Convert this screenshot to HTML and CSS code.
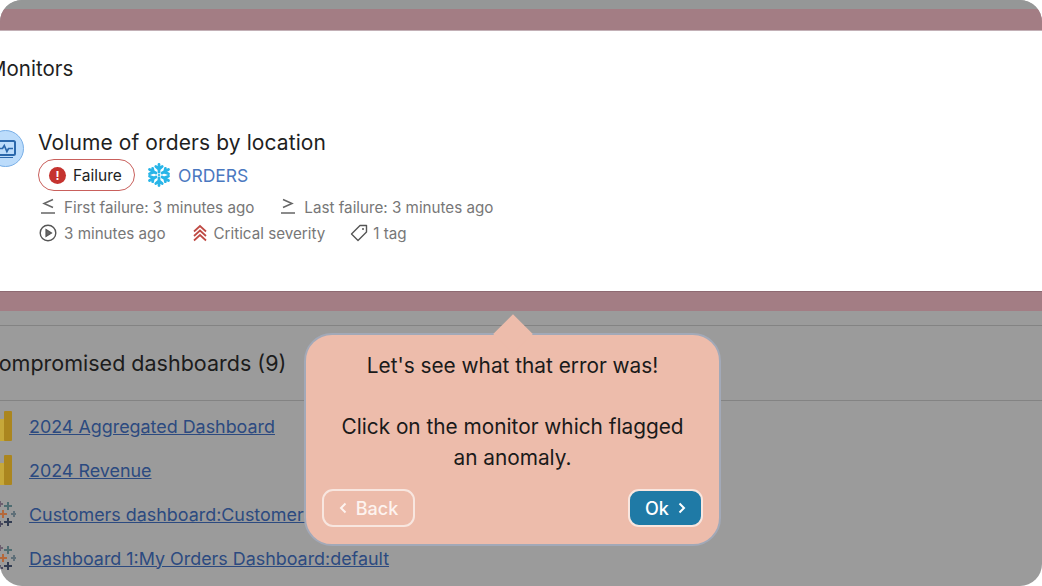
FILE: index.html
```
<!DOCTYPE html>
<html lang="en">
<head>
<meta charset="utf-8">
<title>Monitors</title>
<link rel="stylesheet" href="styles.css">
</head>
<body>
<div class="screen">
  <div class="dim-top"></div>
  <div class="band band-top"></div>
  <section class="card">
    <h2 class="card-title">Monitors</h2>
    <div class="monitor">
      <div class="monitor-icon">
        <svg viewBox="0 0 20 18" width="20" height="18"><rect x="1" y="1" width="18" height="14" rx="1.500" fill="none" stroke="#2a67ab" stroke-width="2"/><path d="M3 8.500h3.500l1.800-3 2.600 6 1.600-3H17" fill="none" stroke="#2a67ab" stroke-width="1.700"/><path d="M3 17.500h14" stroke="#2a67ab" stroke-width="1"/></svg>
      </div>
      <div class="monitor-body">
        <div class="monitor-name">Volume of orders by location</div>
        <div class="tags">
          <span class="badge"><span class="badge-dot">!</span>Failure</span>
          <svg class="snow" viewBox="0 0 24 24" width="24" height="24"><g stroke="#29b5e8" stroke-width="2.800" stroke-linecap="round" fill="none"><path d="M12 1.500v7.500M12 15v7.500M8.800 3.500 12 6.300l3.200-2.800M8.800 20.500 12 17.700l3.200 2.800"/><path d="M2.500 6.500 9 10M15 14l6.500 3.500M2.500 17.500 9 14M15 10l6.500-3.500"/><path d="M2.500 10.800 6.300 9.300 5.600 5.300M21.500 10.800 17.700 9.300l.7-4M2.500 13.200 6.300 14.700l-.7 4M21.500 13.200 17.700 14.700l.7 4"/></g><path d="M12 10.500 13.500 12 12 13.500 10.500 12z" fill="#29b5e8"/></svg>
          <span class="table-name">ORDERS</span>
        </div>
        <div class="meta meta-first">
          <span class="meta-item"><svg class="ic" viewBox="0 0 18 18" width="18" height="18"><path d="M14 1.500 5 5.500l9 4M2 15h14" fill="none" stroke="#666" stroke-width="1.500"/></svg>First failure: 3 minutes ago</span>
          <span class="meta-item"><svg class="ic" viewBox="0 0 18 18" width="18" height="18"><path d="M4 1.500l9 4-9 4M2 15h14" fill="none" stroke="#666" stroke-width="1.500"/></svg>Last failure: 3 minutes ago</span>
        </div>
        <div class="meta">
          <span class="meta-item"><svg class="ic" viewBox="0 0 18 18" width="18" height="18"><circle cx="9" cy="9" r="7.800" fill="none" stroke="#555" stroke-width="1.400"/><path d="M7 5.500 12.500 9 7 12.500z" fill="#666" stroke="#555" stroke-width="1.200"/></svg>3 minutes ago</span>
          <span class="meta-item tight"><svg class="ic" viewBox="0 0 18 18" width="18" height="18"><path d="M3 7.500 9 2l6 5.500M3 12 9 6.500l6 5.500M3 16.500 9 11l6 5.500" fill="none" stroke="#bf4a44" stroke-width="1.700"/></svg>Critical severity</span>
          <span class="meta-item tight"><svg class="ic" viewBox="0 0 18 18" width="18" height="18"><path d="M10 1.500h6.500V8L8 16.500 1.500 10z" fill="none" stroke="#555" stroke-width="1.400" stroke-linejoin="round"/><circle cx="13" cy="5" r="1" fill="#555"/></svg>1 tag</span>
        </div>
      </div>
    </div>
  </section>
  <div class="band band-bottom"></div>
  <section class="lower">
    <h2 class="lower-title">Compromised dashboards (9)</h2>
    <ul class="links">
      <li class="link-row"><svg class="bi" viewBox="0 0 12 30" width="12" height="30"><rect x="-3" y="8" width="8" height="22" fill="#c6a83a"/><rect x="4" y="0" width="8" height="30" rx="1" fill="#ab861f"/></svg><a href="#">2024 Aggregated Dashboard</a></li>
      <li class="link-row"><svg class="bi" viewBox="0 0 12 30" width="12" height="30"><rect x="-3" y="8" width="8" height="22" fill="#c6a83a"/><rect x="4" y="0" width="8" height="30" rx="1" fill="#ab861f"/></svg><a href="#">2024 Revenue</a></li>
      <li class="link-row"><svg class="tb" viewBox="0 0 16 26" width="16" height="26"><g fill="none" stroke-width="2"><path d="M8 1v8M4 5h8" stroke="#4f6d72"/><path d="M3 9v8M-1 13h8" stroke="#b5683a"/><path d="M8 17v8M4 21h8" stroke="#333d52"/><path d="M14 10v6M11 13h5" stroke="#5f6f78"/><path d="M0 0v6M-3 3h6" stroke="#6d6070"/><path d="M0 20v6M-3 23h6" stroke="#4a4a5e"/></g></svg><a href="#">Customers dashboard:Customers</a></li>
      <li class="link-row"><svg class="tb" viewBox="0 0 16 26" width="16" height="26"><g fill="none" stroke-width="2"><path d="M8 1v8M4 5h8" stroke="#4f6d72"/><path d="M3 9v8M-1 13h8" stroke="#b5683a"/><path d="M8 17v8M4 21h8" stroke="#333d52"/><path d="M14 10v6M11 13h5" stroke="#5f6f78"/><path d="M0 0v6M-3 3h6" stroke="#6d6070"/><path d="M0 20v6M-3 23h6" stroke="#4a4a5e"/></g></svg><a href="#">Dashboard 1:My Orders Dashboard:default</a></li>
    </ul>
  </section>
  <aside class="tip">
    <p class="tip-text">Let's see what that error was!<br><br>Click on the monitor which flagged an anomaly.</p>
    <div class="tip-actions">
      <button class="btn btn-back" type="button"><svg viewBox="0 0 8 12" width="8" height="12"><path d="M6.500 1.500 2 6l4.500 4.500" fill="none" stroke="currentColor" stroke-width="2"/></svg>Back</button>
      <button class="btn btn-ok" type="button">Ok<svg viewBox="0 0 8 12" width="8" height="12"><path d="M1.500 1.500 6 6l-4.500 4.500" fill="none" stroke="currentColor" stroke-width="2"/></svg></button>
    </div>
  </aside>
</div>
</body>
</html>
```
FILE: styles.css
```
* { box-sizing: border-box; }
html, body { margin: 0; height: 100%; background: #fff; overflow: hidden; }
body { font-family: Inter, "Liberation Sans", sans-serif; }
.screen {
  position: relative;
  width: 1042px;
  height: 586px;
  border-radius: 22px;
  overflow: hidden;
  background: #9b9b9b;
}
.dim-top { height: 9px; background: #959797; }
.band { height: 21px; background: #a37d84; }
.band-top { border-bottom: 1px solid #c3b0b6; height: 22px; }
.band-bottom { height: 20px; border-top: 1px solid #8e6a72; }
.card { height: 260px; background: #fff; padding: 25px 0 0; }
.card-title {
  margin: 0 0 0 -12px;
  font-size: 20.500px;
  line-height: 26px;
  font-weight: 400;
  color: #1f1f1f;
  white-space: nowrap;
}
.monitor { display: flex; margin: 48px 0 0 -13px; gap: 14px; }
.monitor-icon {
  width: 37px;
  height: 37px;
  border-radius: 50%;
  background: #bcdcfb;
  border: 1px solid #78aee6;
  display: flex;
  align-items: center;
  justify-content: center;
  padding-left: 1px;
  flex: none;
}
.monitor-body { display: flex; flex-direction: column; }
.monitor-name { font-size: 21px; line-height: 26px; color: #1f1f1f; letter-spacing: .1px; }
.tags { display: flex; align-items: center; margin-top: 3px; height: 32px; }
.badge {
  display: flex;
  align-items: center;
  gap: 7px;
  width: 97px;
  height: 32px;
  padding-left: 10px;
  border: 1.500px solid #c9605c;
  border-radius: 16px;
  font-size: 15.500px;
  color: #222;
}
.badge-dot {
  width: 17px;
  height: 17px;
  border-radius: 50%;
  background: #c5332f;
  color: #fff;
  font-size: 12px;
  font-weight: 700;
  line-height: 17px;
  text-align: center;
}
.snow { margin-left: 12px; }
.table-name { margin-left: 7px; font-size: 17.500px; color: #4a78c0; }
.meta { display: flex; height: 26px; align-items: center; font-size: 15.200px; color: #777; }
.meta-first { margin-top: 3px; }
.meta-item { display: flex; align-items: center; gap: 7px; margin-right: 24px; white-space: nowrap; }
.meta-item.tight { gap: 5px; }
.ic { flex: none; margin-left: 1px; }
.lower { margin-top: 14px; border-top: 1px solid #838383; }
.lower-title {
  margin: 0 0 0 -17px;
  height: 75px;
  padding-top: 24px;
  border-bottom: 1px solid #838383;
  font-size: 21.500px;
  line-height: 26px;
  font-weight: 400;
  color: #1c1c1c;
  white-space: nowrap;
}
.links { list-style: none; margin: 3px 0 0; padding: 0; }
.link-row { display: flex; align-items: center; height: 44px; white-space: nowrap; }
.link-row a { color: #2c4a80; font-size: 17.900px; }
.bi { flex: none; margin-right: 17px; }
.tb { flex: none; margin-right: 13px; }
.tip {
  position: absolute;
  left: 304px;
  top: 333px;
  width: 417px;
  height: 213px;
  padding: 16px 16px 17px;
  display: flex;
  flex-direction: column;
  justify-content: space-between;
  background: #edbcab;
  border: 2px solid #a2a9b8;
  border-radius: 28px;
}
.tip::before {
  content: "";
  position: absolute;
  left: 193px;
  top: -15px;
  width: 28px;
  height: 28px;
  background: #edbcab;
  transform: rotate(45deg);
}
.tip-text {
  position: relative;
  margin: 0;
  padding: 0 10px;
  font-size: 20.800px;
  line-height: 30.500px;
  text-align: center;
  color: #1a1a1a;
}
.tip-actions { position: relative; display: flex; justify-content: space-between; }
.btn {
  display: flex;
  align-items: center;
  justify-content: center;
  height: 38px;
  border-radius: 11px;
  border: 2px solid #f8e6df;
  font: 500 18px Inter, "Liberation Sans", sans-serif;
  color: #fff;
  gap: 9px;
}
.btn-back { width: 93px; background: transparent; color: #fdf3ef; }
.btn-ok { width: 75px; background: #1f7aa6; }
```
